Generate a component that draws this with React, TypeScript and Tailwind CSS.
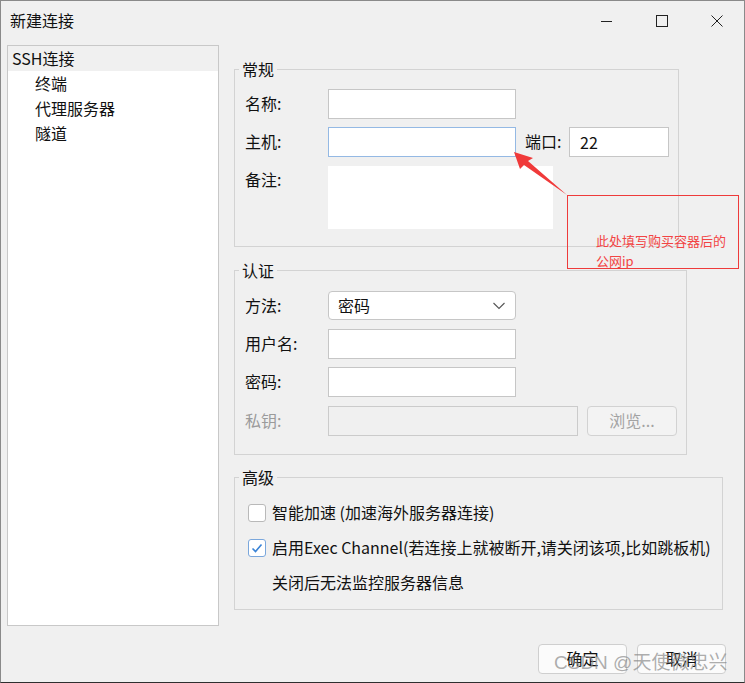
import React from 'react';

const font = "font-['Noto_Sans_CJK_SC','Noto_Sans',sans-serif]";

const Field: React.FC<{ label: string; muted?: boolean }> = ({ label, muted }) => (
  <div className={`w-[83px] shrink-0 -mt-[2px] text-[16px] leading-[20px] ${muted ? 'text-[#9b9b9b]' : 'text-[#111]'}`}>{label}</div>
);

const Input: React.FC<{ w: string; focus?: boolean; value?: string }> = ({ w, focus, value }) => (
  <div
    className={`${w} h-[30px] bg-white border ${focus ? 'border-[#94b9e4]' : 'border-[#c6c6c6]'} flex items-center pl-[10px] pb-[1px] text-[16px] text-[#111]`}
  >
    {value}
  </div>
);

const Checkbox: React.FC<{ checked?: boolean }> = ({ checked }) => (
  <div
    className={`w-[18px] h-[18px] shrink-0 rounded-[3px] border bg-white flex items-center justify-center ${
      checked ? 'border-[#7aa7dc]' : 'border-[#b9b9b9]'
    }`}
  >
    {checked && (
      <svg width="12" height="12" viewBox="0 0 12 12" fill="none">
        <path d="M1.5 6.5 L4.5 9.5 L10.5 2.5" stroke="#3a83d6" strokeWidth="1.6" />
      </svg>
    )}
  </div>
);

const Group: React.FC<{ title: string; className: string; children: React.ReactNode }> = ({ title, className, children }) => (
  <fieldset className={`border border-[#d3d3d3] ${className}`}>
    <legend className="ml-[4px] px-[3px] text-[16px] leading-[20px] text-[#111]">{title}</legend>
    {children}
  </fieldset>
);

export default function App() {
  return (
    <div className={`relative w-[745px] h-[683px] bg-[#f0f0f0] border border-[#8a8a8a] border-b-[#2e2e2e] ${font} overflow-hidden`}>
      {/* title bar */}
      <div className="h-[44px] flex items-center">
        <span className="pl-[9px] text-[16px] text-[#111] leading-[20px] -mt-[6px]">新建连接</span>
        <div className="ml-auto flex -mt-[5px]">
          <div className="w-[55px] flex justify-center">
            <svg width="12" height="12" viewBox="0 0 12 12"><path d="M0 6.5 H11" stroke="#222" strokeWidth="1" /></svg>
          </div>
          <div className="w-[55px] flex justify-center">
            <svg width="12" height="12" viewBox="0 0 12 12"><rect x="0.5" y="0.5" width="11" height="11" fill="none" stroke="#222" strokeWidth="1" /></svg>
          </div>
          <div className="w-[55px] flex justify-center">
            <svg width="12" height="12" viewBox="0 0 12 12"><path d="M0.5 0.5 L11.5 11.5 M11.5 0.5 L0.5 11.5" stroke="#222" strokeWidth="1" /></svg>
          </div>
        </div>
      </div>

      {/* body */}
      <div className="flex items-start">
        <div className="ml-[6px] w-[212px] h-[581px] bg-white border border-[#c8c8c8] text-[16px] text-[#111]">
          <div className="h-[25px] flex items-center pl-[4px] pb-[1px] bg-[#f0f0f0]">SSH连接</div>
          <div className="h-[25px] flex items-center pl-[27px] pb-[1px]">终端</div>
          <div className="h-[25px] flex items-center pl-[27px] pb-[1px]">代理服务器</div>
          <div className="h-[25px] flex items-center pl-[27px] pb-[1px]">隧道</div>
        </div>

        <div className="ml-[15px] mt-[14px] flex flex-col">
          <Group title="常规" className="w-[445px] pb-[17px]">
            <div className="pl-[10px]">
              <div className="mt-[10px] h-[30px] flex items-center">
                <Field label="名称:" />
                <Input w="w-[188px]" />
              </div>
              <div className="mt-[8px] h-[30px] flex items-center">
                <Field label="主机:" />
                <Input w="w-[188px]" focus />
                <div className="ml-[9px] -mt-[2px] w-[44px] text-[16px] leading-[20px] text-[#111]">端口:</div>
                <Input w="w-[100px]" value="22" />
              </div>
              <div className="mt-[9px] flex items-start">
                <div className="pt-[5px]"><Field label="备注:" /></div>
                <div className="w-[225px] h-[63px] bg-white" />
              </div>
            </div>
          </Group>

          <Group title="认证" className="mt-[13px] w-[453px] pb-[18px]">
            <div className="pl-[10px]">
              <div className="mt-[11px] h-[29px] flex items-center">
                <Field label="方法:" />
                <div className="w-[188px] h-[29px] bg-white border border-[#c6c6c6] rounded-[4px] flex items-center pl-[9px] pr-[10px] text-[16px] text-[#111]">
                  <span className="-mt-[2px]">密码</span>
                  <svg className="ml-auto" width="12" height="8" viewBox="0 0 12 8" fill="none">
                    <path d="M0.5 1 L6 6.5 L11.5 1" stroke="#555" strokeWidth="1.1" />
                  </svg>
                </div>
              </div>
              <div className="mt-[9px] h-[30px] flex items-center">
                <Field label="用户名:" />
                <Input w="w-[188px]" />
              </div>
              <div className="mt-[8px] h-[30px] flex items-center">
                <Field label="密码:" />
                <Input w="w-[188px]" />
              </div>
              <div className="mt-[9px] h-[30px] flex items-center">
                <Field label="私钥:" muted />
                <div className="w-[250px] h-[30px] bg-[#f0f0f0] border border-[#cbcbcb]" />
                <div className="ml-[9px] w-[90px] h-[30px] pb-[2px] border border-[#d2d2d2] rounded-[4px] bg-[#f3f3f3] flex items-center justify-center text-[16px] text-[#a3a3a3]">
                  浏览...
                </div>
              </div>
            </div>
          </Group>

          <Group title="高级" className="mt-[12px] w-[489px] pb-[9px]">
            <div className="pl-[13px] pt-[8px] text-[16px] text-[#111]">
              <div className="h-[35px] flex items-center gap-[6px]">
                <Checkbox />
                <span className="-mt-[1px]">智能加速 (加速海外服务器连接)</span>
              </div>
              <div className="h-[35px] flex items-center gap-[6px] whitespace-nowrap">
                <Checkbox checked />
                <span className="-mt-[1px]">启用Exec Channel(若连接上就被断开,请关闭该项,比如跳板机)</span>
              </div>
              <div className="h-[35px] flex items-center pl-[24px] pb-[2px]">关闭后无法监控服务器信息</div>
            </div>
          </Group>
        </div>
      </div>

      {/* buttons */}
      <div className="mt-[18px] flex justify-end gap-[10px] pr-[18px]">
        <div className="w-[89px] h-[30px] pb-[2px] rounded-[4px] border border-[#cfcfcf] bg-[#fbfbfb] flex items-center justify-center text-[16px] text-[#111]">确定</div>
        <div className="w-[89px] h-[30px] pb-[2px] rounded-[4px] border border-[#cfcfcf] bg-[#fbfbfb] flex items-center justify-center text-[16px] text-[#111]">取消</div>
      </div>

      {/* annotation overlay */}
      <svg className="absolute left-0 top-0 pointer-events-none" width="745" height="683" viewBox="0 0 745 683">
        <polygon points="513,151 532,157 527,160 566,194 523,164 519,168" fill="#f03a3a" />
        <rect x="566.5" y="194.5" width="171" height="73" fill="none" stroke="#ee3b3b" strokeWidth="1" />
      </svg>
      <div className="absolute left-[595px] top-[230px] text-[13px] leading-[20px] text-[#f24444]">
        <div>此处填写购买容器后的</div>
        <div>公网ip</div>
      </div>

      {/* watermark */}
      <div className="absolute left-[553px] top-[649px] text-[19px] leading-[26px] text-[#8a8a8a]/70 pointer-events-none font-['Liberation_Sans','Noto_Sans_CJK_SC',sans-serif]">
        CSDN @天使微忠兴
      </div>
    </div>
  );
}
